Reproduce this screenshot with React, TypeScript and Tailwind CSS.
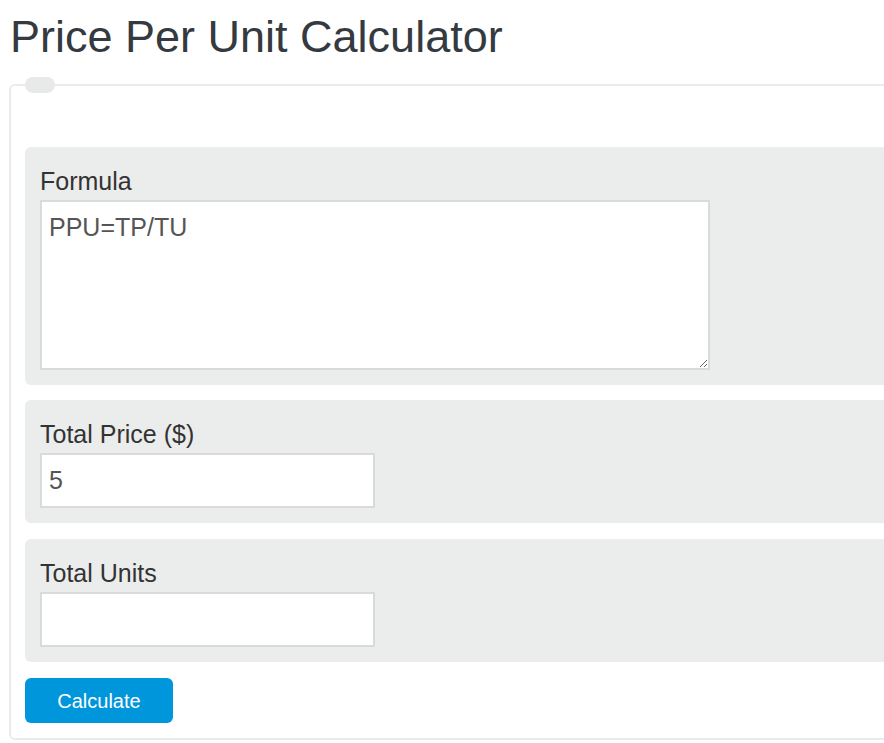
import { useState } from "react";

const font = { fontFamily: '"Liberation Sans", Arial, sans-serif' };

function Field({
  label,
  className = "",
  children,
}: {
  label: string;
  className?: string;
  children: React.ReactNode;
}) {
  return (
    <div className={`bg-[#ebecec] rounded-[6px] px-[15px] pt-[19px] pb-[15px] ${className}`}>
      <label className="block text-[25px] leading-[30px] text-[#333] mb-[4px]">{label}</label>
      {children}
    </div>
  );
}

export default function App() {
  const [formula, setFormula] = useState("PPU=TP/TU");
  const [price, setPrice] = useState("5");
  const [units, setUnits] = useState("");

  return (
    <div className="w-[884px] h-[743px] overflow-hidden bg-white" style={font}>
      <h1 className="text-[45px] leading-[54px] font-normal text-[#343a40] mt-[10px] ml-[10px]">
        Price Per Unit Calculator
      </h1>
      <fieldset className="ml-[9px] mt-[13px] w-[920px] border-2 border-[#ebebeb] rounded-[6px] pl-[14px] pr-[14px] pt-[54px] pb-[15px]">
        <legend className="w-[30px] h-[16px] rounded-full bg-[#e8e9e9] p-0"></legend>
        <div className="flex flex-col">
          <Field label="Formula" className="mb-[15px]">
            <textarea
              value={formula}
              onChange={(e) => setFormula(e.target.value)}
              className="block w-[670px] h-[170px] border-2 border-[#dadada] bg-white text-[25px] leading-[37px] text-[#555] px-[7px] py-[7px] outline-none"
            />
          </Field>
          <Field label="Total Price ($)" className="mb-[16px]">
            <input
              type="text"
              value={price}
              onChange={(e) => setPrice(e.target.value)}
              className="block w-[335px] h-[55px] border-2 border-[#dadada] bg-white text-[25px] text-[#555] px-[7px] outline-none"
            />
          </Field>
          <Field label="Total Units" className="mb-[16px]">
            <input
              type="text"
              value={units}
              onChange={(e) => setUnits(e.target.value)}
              className="block w-[335px] h-[55px] border-2 border-[#dadada] bg-white text-[25px] text-[#555] px-[7px] outline-none"
            />
          </Field>
          <div>
            <button className="w-[148px] h-[45px] rounded-[6px] bg-[#0096db] text-white text-[20px]">
              Calculate
            </button>
          </div>
        </div>
      </fieldset>
    </div>
  );
}
